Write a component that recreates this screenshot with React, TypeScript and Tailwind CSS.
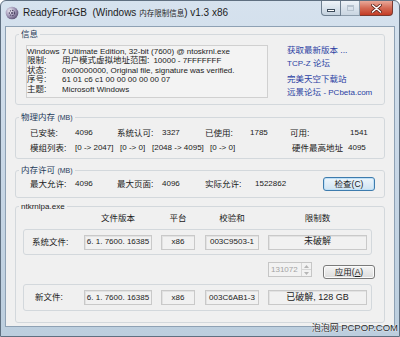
import type { ReactNode } from "react";

const FONT = "font-['Liberation_Sans','Noto_Sans_CJK_SC',sans-serif]";

function Group({ legend, className = "", children }: { legend: ReactNode; className?: string; children: ReactNode }) {
  return (
    <fieldset className={`mx-[9px] rounded-[3px] border border-[#d3d8dc] ${className}`}>
      <legend className="ml-[3px] px-[2px] h-[12px] leading-[12px] text-[8.5px] text-[#1e3a5a]">{legend}</legend>
      {children}
    </fieldset>
  );
}

function Field({ w, children, big }: { w: string; children: ReactNode; big?: boolean }) {
  return (
    <div
      className={`${w} h-[15px] flex items-center justify-center border border-[#c9c9c9] bg-[#f1f1f1] shadow-[inset_1px_1px_0_#e2e2e2] ${
        big ? "text-[9px]" : "text-[8px]"
      } text-[#222]`}
    >
      {children}
    </div>
  );
}

function Button({ label, hot, def }: { label: string; hot: string; def?: boolean }) {
  return (
    <button
      className={`w-[52px] h-[14px] rounded-[3px] border text-[8.5px] leading-[12px] text-[#1b1b1b] bg-gradient-to-b ${
        def
          ? "border-[#3d7bad] from-[#eef6fc] to-[#cfe3f2] shadow-[inset_0_0_0_1px_#bfe0f7]"
          : "border-[#7a7a7a] from-[#f5f5f5] to-[#dcdcdc] shadow-[inset_0_0_0_1px_#fbfbfb]"
      }`}
    >
      {label}(<span className={def ? "" : "underline"}>{hot}</span>)
    </button>
  );
}

function FileRow({ label, pad, lw, ver, plat, sum, limit }: { label: string; pad: string; lw: string; ver: string; plat: string; sum: string; limit: string }) {
  return (
    <div className={`ml-[7px] w-[349px] rounded-[3px] border border-[#d3d8dc] flex items-center ${pad}`}>
      <span className={`${lw} text-[8.5px]`}>{label}</span>
      <Field w="w-[68px]">{ver}</Field>
      <div className="w-[9px]" />
      <Field w="w-[34px]">{plat}</Field>
      <div className="w-[10px]" />
      <Field w="w-[54px]">{sum}</Field>
      <div className="w-[9px]" />
      <Field w="w-[99px]" big>
        {limit}
      </Field>
    </div>
  );
}

export default function App() {
  return (
    <div className={`${FONT} relative w-[400px] h-[337px] overflow-hidden rounded-t-[6px] border border-[#5f6f80] bg-gradient-to-b from-[#d6e2ee] via-[#c8d7e6] to-[#bccede] text-[#1a1a1a]`}>
      {/* title bar */}
      <div className="flex items-start h-[25px]">
        <svg className="mt-[5px] ml-[4px]" width="14" height="14" viewBox="0 0 14 14">
          <defs>
            <radialGradient id="ball" cx="0.35" cy="0.35" r="0.7">
              <stop offset="0" stopColor="#f4f2f8" />
              <stop offset="0.6" stopColor="#9d93b3" />
              <stop offset="1" stopColor="#5d5475" />
            </radialGradient>
          </defs>
          <circle cx="7" cy="7" r="6.3" fill="url(#ball)" />
          <circle cx="7" cy="7" r="2.6" fill="none" stroke="#4f4766" strokeWidth="1.2" strokeDasharray="1.4 1" />
          <circle cx="7" cy="7" r="1" fill="#4f4766" />
        </svg>
        <div className="ml-[4px] mt-[5px] leading-[14px] text-[10px] text-[#1c1c1c]">
          ReadyFor4GB&nbsp; (Windows <span className="text-[7.5px]">内存限制信息</span>) v1.3 x86
        </div>
        <div className="ml-auto mr-[6px] flex">
          <div className="w-[20px] h-[15px] rounded-bl-[4px] border border-t-0 border-[#6e7f90] bg-gradient-to-b from-[#eef3f8] via-[#d9e3ec] to-[#c4d1de] flex items-end justify-center pb-[3px]">
            <div className="w-[8px] h-[3px] bg-white border border-[#3c4b5a]" />
          </div>
          <div className="w-[19px] h-[15px] border border-t-0 border-l-0 border-[#8c9cab] bg-gradient-to-b from-[#eef3f8] via-[#dae3ec] to-[#c9d5e1] flex items-center justify-center">
            <div className="w-[7px] h-[6px] border border-[#b6c2ce] border-t-2" />
          </div>
          <div className="w-[33px] h-[15px] rounded-br-[4px] border border-t-0 border-l-0 border-[#7a3a30] bg-gradient-to-b from-[#e9a99a] via-[#d46a55] to-[#c33b24] flex items-center justify-center">
            <svg width="11" height="9" viewBox="0 0 11 9">
              <path d="M1.5 1 L9.5 8 M9.5 1 L1.5 8" stroke="#5a2018" strokeWidth="3" strokeLinecap="round" />
              <path d="M1.5 1 L9.5 8 M9.5 1 L1.5 8" stroke="#ffffff" strokeWidth="1.6" strokeLinecap="round" />
            </svg>
          </div>
        </div>
      </div>

      {/* client area */}
      <div className="mx-[4px] h-[301px] border border-[#8ea1b4] bg-[#f0f0f0]">
        <Group legend="信息" className="mt-[1px] pb-[5px]">
          <div className="flex items-start">
            <div className="ml-[10px] mt-[5px] w-[242px] h-[53px] border border-[#d0d0d0] bg-[#f3f3f3] pt-[1px] leading-[9.4px] text-[8px] text-[#222] whitespace-nowrap">
              <div>Windows 7 Ultimate Edition, 32-bit (7600) @ ntoskrnl.exe</div>
              <div className="flex">
                <span className="w-[35px] text-[8.5px]">限制:</span>
                <span className="text-[8.5px]">用户模式虚拟地址范围:</span>
                <span className="ml-[4px]">10000 - 7FFFFFFF</span>
              </div>
              <div className="flex">
                <span className="w-[35px] text-[8.5px]">状态:</span>
                <span>0x00000000, Original file, signature was verified.</span>
              </div>
              <div className="flex">
                <span className="w-[35px] text-[8.5px]">序号:</span>
                <span>61 01 c6 c1 00 00 00 00 00 07</span>
              </div>
              <div className="flex">
                <span className="w-[35px] text-[8.5px]">主题:</span>
                <span>Microsoft Windows</span>
              </div>
            </div>
            <div className="ml-[19px] mt-[4px] flex flex-col text-[8.5px] leading-[12px] text-[#2b3fa3] whitespace-nowrap">
              <span>获取最新版本 ...</span>
              <span className="mt-[1px]">
                <span className="text-[8px]">TCP-Z</span> 论坛
              </span>
              <span className="mt-[3px]">完美天空下载站</span>
              <span className="mt-[1px]">
                远景论坛 <span className="text-[8px]">- PCbeta.com</span>
              </span>
            </div>
          </div>
        </Group>

        <Group
          legend={
            <>
              物理内存 <span className="text-[7px]">(MB)</span>
            </>
          }
          className="mt-[6px] pb-[3px]"
        >
          <div className="mt-[3px] pl-[14px] flex h-[14px] items-center text-[8px] whitespace-nowrap">
            <span className="w-[45px] text-[8.5px]">已安装:</span>
            <span className="w-[42px]">4096</span>
            <span className="w-[45px] text-[8.5px]">系统认可:</span>
            <span className="w-[43px]">3327</span>
            <span className="w-[45px] text-[8.5px]">已使用:</span>
            <span className="w-[40px]">1785</span>
            <span className="w-[60px] text-[8.5px]">可用:</span>
            <span>1541</span>
          </div>
          <div className="mt-[1px] pl-[14px] flex h-[14px] items-center text-[8px] whitespace-nowrap">
            <span className="w-[45px] text-[8.5px]">模组列表:</span>
            <span className="w-[45px]">[0 -&gt; 2047]</span>
            <span className="w-[32px]">[0 -&gt; 0]</span>
            <span className="w-[58px]">[2048 -&gt; 4095]</span>
            <span className="w-[82px]">[0 -&gt; 0]</span>
            <span className="w-[56px] text-[8.5px]">硬件最高地址</span>
            <span>4095</span>
          </div>
        </Group>

        <Group
          legend={
            <>
              内存许可 <span className="text-[7px]">(MB)</span>
            </>
          }
          className="mt-[5px] pb-[6px]"
        >
          <div className="mt-[1px] pl-[14px] flex h-[14px] items-center text-[8px] whitespace-nowrap">
            <span className="w-[45px] text-[8.5px]">最大允许:</span>
            <span className="w-[42px]">4096</span>
            <span className="w-[45px] text-[8.5px]">最大页面:</span>
            <span className="w-[43px]">4096</span>
            <span className="w-[50px] text-[8.5px]">实际允许:</span>
            <span className="w-[68px]">1522862</span>
            <Button label="检查" hot="C" def />
          </div>
        </Group>

        <Group legend={<span className="text-[8px] text-[#1a1a1a]">ntkrnlpa.exe</span>} className="mt-[2px] pb-[11px]">
          <div className="pl-[68px] flex h-[12px] items-center text-[8.5px] whitespace-nowrap">
            <span className="w-[68px] text-center">文件版本</span>
            <span className="w-[9px]" />
            <span className="w-[34px] text-center">平台</span>
            <span className="w-[10px]" />
            <span className="w-[54px] text-center">校验和</span>
            <span className="w-[9px]" />
            <span className="w-[99px] text-center">限制数</span>
          </div>
          <div className="mt-[5px] h-[26px] flex">
            <FileRow label="系统文件:" pad="pl-[8px]" lw="w-[52px]" ver="6. 1. 7600. 16385" plat="x86" sum="003C9503-1" limit="未破解" />
          </div>
          <div className="mt-[7px] h-[15px] flex items-center">
            <div className="ml-[252px] w-[44px] h-[15px] flex border border-[#c6c6c6] bg-[#f2f2f2]">
              <span className="flex-1 text-[8px] leading-[13px] text-[#a3a3a3] pl-[2px]">131072</span>
              <div className="w-[10px] flex flex-col border-l border-[#d6d6d6]">
                <div className="flex-1 flex items-center justify-center border-b border-[#d6d6d6]">
                  <svg width="5" height="3" viewBox="0 0 5 3">
                    <path d="M0 3 L2.5 0 L5 3 Z" fill="#b5b5b5" />
                  </svg>
                </div>
                <div className="flex-1 flex items-center justify-center">
                  <svg width="5" height="3" viewBox="0 0 5 3">
                    <path d="M0 0 L2.5 3 L5 0 Z" fill="#b5b5b5" />
                  </svg>
                </div>
              </div>
            </div>
            <div className="ml-[11px]">
              <Button label="应用" hot="A" />
            </div>
          </div>
          <div className="mt-[7px] h-[27px] flex">
            <FileRow label="新文件:" pad="pl-[11px]" lw="w-[49px]" ver="6. 1. 7600. 16385" plat="x86" sum="003C6AB1-3" limit="已破解, 128 GB" />
          </div>
        </Group>
      </div>

      <div className="absolute right-[1px] bottom-[2px] text-[9px] leading-[11px] text-[#2a2a2a] [text-shadow:0_0_2px_#fff,0_0_1px_#fff]">
        泡泡网 <span className="text-[9.5px]">PCPOP.COM</span>
      </div>
    </div>
  );
}
